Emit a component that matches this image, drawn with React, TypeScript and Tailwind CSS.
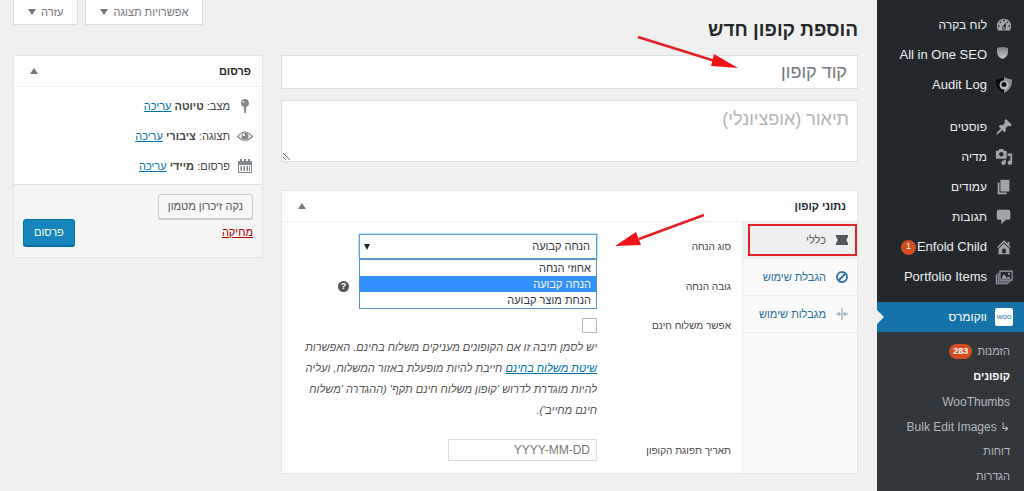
import type { ReactNode } from "react"

const icons = {
  dashboard:
    "M3.76 16h12.48c1.1-1.37 1.76-3.11 1.76-5 0-4.42-3.58-8-8-8s-8 3.58-8 8c0 1.89.66 3.63 1.76 5zM10 4c.55 0 1 .45 1 1s-.45 1-1 1-1-.45-1-1 .45-1 1-1zM6 6c.55 0 1 .45 1 1s-.45 1-1 1-1-.45-1-1 .45-1 1-1zm8 0c.55 0 1 .45 1 1s-.45 1-1 1-1-.45-1-1 .45-1 1-1zm-5.37 5.55L12 7v6c0 1.1-.9 2-2 2s-2-.9-2-2c0-.57.24-1.08.63-1.45zM4 10c.55 0 1 .45 1 1s-.45 1-1 1-1-.45-1-1 .45-1 1-1zm12 0c.55 0 1 .45 1 1s-.45 1-1 1-1-.45-1-1 .45-1 1-1zm-5 3c0-.55-.45-1-1-1s-1 .45-1 1 .45 1 1 1 1-.45 1-1z",
  post: "M10.44 3.02l1.82-1.82 6.36 6.35-1.83 1.82c-1.05-.68-2.48-.57-3.41.36l-.75.75c-.92.93-1.04 2.35-.35 3.41l-1.83 1.82-2.41-2.41-2.8 2.79c-.42.42-3.38 2.71-3.8 2.29s1.86-3.39 2.28-3.81l2.79-2.79L4.1 9.36l1.83-1.82c1.05.69 2.48.57 3.4-.36l.75-.75c.93-.92 1.05-2.35.36-3.41z",
  media:
    "M13 11V4c0-.55-.45-1-1-1h-1.67L9 1H5L3.67 3H2c-.55 0-1 .45-1 1v7c0 .55.45 1 1 1h10c.55 0 1-.45 1-1zM7 4.5c1.38 0 2.5 1.12 2.5 2.5S8.38 9.5 7 9.5 4.5 8.38 4.5 7 5.62 4.5 7 4.5zM14 6h5v10.5c0 1.38-1.12 2.5-2.5 2.5S14 17.88 14 16.5s1.12-2.5 2.5-2.5c.17 0 .34.02.5.05V9h-3V6zm-4 8.05V13h2v3.5c0 1.38-1.12 2.5-2.5 2.5S7 17.88 7 16.5 8.12 14 9.5 14c.17 0 .34.02.5.05z",
  page: "M6 15V2h10v13H6zm-1 1h8v2H3V5h2v11z",
  comments:
    "M4 2h11c1.1 0 2 .9 2 2v7c0 1.1-.9 2-2 2h-3l-5 5v-5H4c-1.1 0-2-.9-2-2V4c0-1.1.9-2 2-2z",
  home: "M16 8.5l1.53 1.53-1.06 1.06L10 4.6l-6.47 6.49-1.06-1.06L10 2.5l4 4v-2h2v4zm-6-2.46l6 5.99V18H4v-5.97zM12 17v-5H8v5h4z",
}

function Dashicon({ name }: { name: keyof typeof icons }) {
  return (
    <svg viewBox="0 0 20 20" className="size-[18px]" fill="#a0a5aa" fillRule="evenodd">
      <path d={icons[name]} />
    </svg>
  )
}

function SeoShield() {
  return (
    <svg viewBox="0 0 18 18" className="size-[18px]">
      <defs>
        <linearGradient id="seo" x1="0" y1="0" x2="0" y2="1">
          <stop offset="0" stopColor="#7b7d7f" />
          <stop offset="1" stopColor="#c8c9ca" />
        </linearGradient>
      </defs>
      <path d="M2 2q5-2 11 0v4q0 5-5.500 7Q2 11 2 6z" fill="url(#seo)" />
    </svg>
  )
}

function AuditShield() {
  return (
    <svg viewBox="0 0 18 18" className="size-[18px]">
      <path d="M9 1Q5 3 1 3.500q-.5 9.500 8 13.500z" fill="#08090a" />
      <path d="M9 1q4 2 8 2.500.5 9.500-8 13.500z" fill="#8d9196" />
      <circle cx="9" cy="9" r="4.500" fill="#b9bcbf" />
      <circle cx="9" cy="8.500" r="2.500" fill="#111417" />
    </svg>
  )
}

function Gallery() {
  return (
    <svg viewBox="0 0 20 20" className="size-[18px]" fill="none" stroke="#a79db2" strokeWidth="1.2">
      <path d="M5.500 3.500h13.500v10H5.500zM3.500 5.500v10h13.500M1.500 7.500v10H15" />
      <path d="M7 12l3-5 3 4 2-1.500 2.500 2.500z" fill="#a0a5aa" stroke="none" />
      <circle cx="15.500" cy="6.500" r="1.200" fill="#a0a5aa" stroke="none" />
    </svg>
  )
}

function WooBadge() {
  return (
    <span className="flex size-[18px] items-center justify-center rounded-xs bg-white text-[8px] leading-none text-[#1c74a8]">
      woo
    </span>
  )
}

function Triangle({ up = false }: { up?: boolean }) {
  return (
    <svg viewBox="0 0 8 6" className="h-[6px] w-[8px] shrink-0" fill="#72777c">
      <path d={up ? "M4 0l4 6H0z" : "M0 0h8L4 6z"} />
    </svg>
  )
}

type MenuItem = { label: string; icon: ReactNode; count?: number }

const menuGroups: MenuItem[][] = [
  [
    { label: "לוח בקרה", icon: <Dashicon name="dashboard" /> },
    { label: "All in One SEO", icon: <SeoShield /> },
    { label: "Audit Log", icon: <AuditShield /> },
  ],
  [
    { label: "פוסטים", icon: <Dashicon name="post" /> },
    { label: "מדיה", icon: <Dashicon name="media" /> },
    { label: "עמודים", icon: <Dashicon name="page" /> },
    { label: "תגובות", icon: <Dashicon name="comments" /> },
    { label: "Enfold Child", icon: <Dashicon name="home" />, count: 1 },
    { label: "Portfolio Items", icon: <Gallery /> },
  ],
]

const submenu = [
  { label: "הזמנות", count: 283 },
  { label: "קופונים", current: true },
  { label: "WooThumbs" },
  { label: "↳ Bulk Edit Images" },
  { label: "דוחות" },
  { label: "הגדרות" },
]

// Latin labels are set one step larger than the Hebrew ones
const isLatin = (label: string) => /[A-Za-z]/.test(label)

function Sidebar() {
  return (
    <nav className="flex w-[147px] shrink-0 flex-col bg-[#23282d] pt-[10px] text-[12px] text-[#eee]">
      {menuGroups.map((group, i) => (
        <ul key={i} className={i === 0 ? "mb-3" : "mb-[10px]"}>
          {group.map((item) => (
            <li key={item.label}>
              <a
                href="#"
                className={`flex h-[30px] items-center gap-2 ps-[11px] whitespace-nowrap ${isLatin(item.label) ? "text-[13px]" : ""}`}
              >
                {item.icon}
                <span className="flex items-center gap-px">
                  {item.label}
                  {item.count && (
                    <span className="flex size-[15px] items-center justify-center rounded-full bg-[#d54e21] text-[9px] text-white">
                      {item.count}
                    </span>
                  )}
                </span>
              </a>
            </li>
          ))}
        </ul>
      ))}
      <a href="#" className="relative flex h-[30px] items-center gap-2 bg-[#1673aa] ps-[11px] text-white">
        <WooBadge />
        ווקומרס
        <svg viewBox="0 0 7 14" className="absolute top-2 left-0 h-[14px] w-[7px]" fill="#f0f0f0">
          <path d="M0 0l7 7-7 7z" />
        </svg>
      </a>
      <ul className="flex-1 bg-[#32373c] pt-[7px] text-[11px] text-[#b4b9be]">
        {submenu.map((item) => (
          <li key={item.label}>
            <a
              href="#"
              className={`flex h-[25px] items-center gap-[5px] ps-[14px] whitespace-nowrap ${item.current ? "font-bold text-white" : ""} ${isLatin(item.label) ? "text-[12px]" : ""}`}
            >
              {item.label}
              {item.count && (
                <span className="flex h-[15px] items-center rounded-full bg-[#d54e21] px-1 text-[9px] font-bold text-white">
                  {item.count}
                </span>
              )}
            </a>
          </li>
        ))}
      </ul>
    </nav>
  )
}

function BoxHeader({ title }: { title: string }) {
  return (
    <div className="flex h-[31px] items-center justify-between border-b border-[#eee] ps-[11px] pe-4">
      <h2 className="text-[11px] font-bold text-[#23282d]">{title}</h2>
      <button type="button" aria-label="כיווץ" className="flex">
        <Triangle up />
      </button>
    </div>
  )
}

const statusRows = [
  {
    label: "מצב:",
    value: "טיוטה",
    icon: (
      <svg viewBox="0 0 16 16" className="size-4" fill="#82878c">
        <path d="M8 1a4 4 0 0 1 1.200 7.800L8.800 15H7.200L6.800 8.800A4 4 0 0 1 8 1zm-1.500 2a2 2 0 0 0-.8 2l1-.2q0-.8.700-1.200z" fillRule="evenodd" />
      </svg>
    ),
  },
  {
    label: "תצוגה:",
    value: "ציבורי",
    icon: (
      <svg viewBox="0 0 16 16" className="size-4" fill="none" stroke="#82878c">
        <path d="M.6 8.500Q8-.5 15.400 8.500 8 16 .6 8.500z" strokeWidth="1.200" />
        <circle cx="8" cy="8" r="3.600" fill="#82878c" stroke="none" />
        <circle cx="6.800" cy="6.800" r="1.200" fill="#fff" stroke="none" />
      </svg>
    ),
  },
  {
    label: "פרסום:",
    value: "מיידי",
    icon: (
      <svg viewBox="0 0 16 16" className="size-4" fill="#82878c" fillRule="evenodd">
        <path d="M1 3h2V1h2v2h2V1h2v2h2V1h2v2h2v12H1zm1 4v7h12V7zm1.500 1H5v5H3.500zm3 0H8v5H6.500zm3 0H11v5H9.500zm2.500 0h1v5h-1z" />
      </svg>
    ),
  },
]

function PublishBox() {
  return (
    <aside className="w-[250px] shrink-0 self-start border border-[#e5e5e5] bg-white">
      <BoxHeader title="פרסום" />
      <ul className="pt-1 pb-[3px]">
        {statusRows.map((row) => (
          <li key={row.label} className="flex h-[30px] items-center gap-[7px] px-[9px]">
            {row.icon}
            <span>
              {row.label} <b>{row.value}</b>{" "}
              <a href="#" className="text-[#0073aa] underline">
                עריכה
              </a>
            </span>
          </li>
        ))}
      </ul>
      <div className="flex flex-col border-t border-[#ddd] bg-[#f5f5f5] px-[9px] pt-[9px] pb-[11px]">
        <button
          type="button"
          className="h-[25px] self-start rounded-[3px] border border-[#ccc] bg-[#f7f7f7] px-[9px] text-[#555] shadow-[0_1px_0_#ccc]"
        >
          נקה זיכרון מטמון
        </button>
        <div className="flex items-center justify-between">
          <a href="#" className="text-[#a00] underline">
            מחיקה
          </a>
          <button
            type="button"
            className="h-[27px] rounded-[3px] border border-[#0073aa] bg-[#1585bb] px-[10px] text-white shadow-[0_1px_0_#006799]"
          >
            פרסום
          </button>
        </div>
      </div>
    </aside>
  )
}

function Arrow({ className, line, head }: { className: string; line: string; head: string }) {
  return (
    <svg viewBox="0 0 102 36" className={`pointer-events-none absolute h-[36px] w-[102px] ${className}`}>
      <path d={line} stroke="#e31f23" strokeWidth="2.4" />
      <path d={head} fill="#f01418" />
    </svg>
  )
}

const tabs = [
  {
    label: "כללי",
    active: true,
    icon: (
      <svg viewBox="0 0 12 12" className="size-3" fill="#50555a">
        <path d="M0 1h12v2q-3 3 0 6v2H0V9q3-3 0-6z" />
      </svg>
    ),
  },
  {
    label: "הגבלת שימוש",
    icon: (
      <svg viewBox="0 0 12 12" className="size-3" fill="none" stroke="#2a6f9e" strokeWidth="1.8">
        <circle cx="6" cy="6" r="5" />
        <path d="M9.500 2.500l-7 7" />
      </svg>
    ),
  },
  {
    label: "מגבלות שימוש",
    icon: (
      <svg viewBox="0 0 12 12" className="size-3" fill="none" stroke="#7f97a8">
        <path d="M6 0v12M0 6h4M12 6H8M2.500 4l2 2-2 2M9.500 4l-2 2 2 2" />
      </svg>
    ),
  },
]

const discountTypes = ["אחוזי הנחה", "הנחה קבועה", "הנחת מוצר קבועה"]

function DiscountType() {
  return (
    <div className="relative w-[238px]">
      <select
        id="discount_type"
        defaultValue={discountTypes[1]}
        className="block h-[25px] w-full appearance-none border border-[#5b9dd9] bg-white ps-[6px] text-[11px] text-[#32373c] shadow-[0_0_2px_rgba(30,140,190,.8)]"
      >
        {discountTypes.map((type) => (
          <option key={type}>{type}</option>
        ))}
      </select>
      <svg viewBox="0 0 6 6" className="pointer-events-none absolute top-[10px] left-[5px] size-[6px]" fill="#222">
        <path d="M0 0h6L3 6z" />
      </svg>
      <ul className="absolute inset-x-0 top-full z-10 border border-[#5b8fc4] bg-white text-[11px] leading-4 text-[#32373c]">
        {discountTypes.map((type, i) => (
          <li key={type} className={i === 1 ? "bg-[#3390ff] px-[5px] text-white" : "px-[5px]"}>
            {type}
          </li>
        ))}
      </ul>
    </div>
  )
}

function CouponData() {
  return (
    <section className="mt-7 border border-[#e5e5e5] bg-white">
      <BoxHeader title="נתוני קופון" />
      <div className="flex">
        <ul className="w-[115px] shrink-0 border-e border-[#eee] bg-[#fafafa]">
          {tabs.map((tab) => (
            <li key={tab.label} className={`relative border-b border-[#eee] ${tab.active ? "bg-[#eee]" : ""}`}>
              <a
                href="#"
                className={`flex h-9 items-center gap-[10px] ps-[9px] whitespace-nowrap ${tab.active ? "text-[#555]" : "text-[#1f6d9c]"}`}
              >
                {tab.icon}
                {tab.label}
              </a>
              {tab.active && <span className="absolute inset-y-[2px] right-0 left-[5px] border-2 border-[#e02326]" />}
            </li>
          ))}
        </ul>
        <form className="flex min-w-0 flex-1 flex-col ps-[11px] pt-3 pb-3">
          <div className="relative flex items-center">
            <label htmlFor="discount_type" className="w-[134px] shrink-0 text-[10px]">
              סוג הנחה
            </label>
            <DiscountType />
            <Arrow className="-top-[22px] right-[20px]" line="M95 3L30 27" head="M6 34L27 20L32 33z" />
          </div>
          <div className="mt-[15px] flex items-center">
            <label htmlFor="coupon_amount" className="w-[134px] shrink-0 text-[10px]">
              גובה הנחה
            </label>
            <input id="coupon_amount" className="h-[25px] w-[238px] border border-[#ddd] px-[6px]" />
            <button
              type="button"
              aria-label="עזרה"
              className="ms-[10px] flex size-[11px] items-center justify-center rounded-full bg-[#555] text-[9px] font-bold text-white"
            >
              ?
            </button>
          </div>
          <div className="mt-[19px] flex items-center">
            <label htmlFor="free_shipping" className="w-[134px] shrink-0 text-[10px]">
              אפשר משלוח חינם
            </label>
            <input id="free_shipping" type="checkbox" className="size-[15px] appearance-none border border-[#b4b9be] bg-white" />
          </div>
          <p className="ms-[134px] mt-1 max-w-[300px] leading-[21px] text-[#555] italic">
            יש לסמן תיבה זו אם הקופונים מעניקים משלוח בחינם. האפשרות{" "}
            <a href="#" className="text-[#0073aa] underline">
              שיטת משלוח בחינם
            </a>{" "}
            חייבת להיות מופעלת באזור המשלוח, ועליה להיות מוגדרת לדרוש 'קופון משלוח חינם תקף' (ההגדרה 'משלוח חינם מחייב').
          </p>
          <div className="mt-[18px] flex items-center">
            <label htmlFor="expiry_date" className="w-[134px] shrink-0 text-[10px]">
              תאריך תפוגת הקופון
            </label>
            <input
              id="expiry_date"
              placeholder="YYYY-MM-DD"
              className="h-[22px] w-[149px] border border-[#ddd] px-[6px] text-[12px] placeholder:text-[#777]"
            />
          </div>
        </form>
      </div>
    </section>
  )
}

export default function App() {
  return (
    <div dir="rtl" className="flex min-h-screen bg-[#f0f0f0] font-['Liberation_Sans',sans-serif] text-[11px] text-[#444]">
      <Sidebar />
      <main className="min-w-0 flex-1 ps-[19px] pe-[13px]">
        <header className="flex h-[55px] items-start justify-between">
          <h1 className="pt-4 text-[19px] leading-7 font-bold text-[#23282d]">הוספת קופון חדש</h1>
          <div className="flex gap-[7px]">
            {["אפשרויות תצוגה", "עזרה"].map((label) => (
              <button
                key={label}
                type="button"
                className="flex h-[25px] items-center gap-[5px] border border-t-0 border-[#ddd] bg-white px-[14px] text-[#72777c]"
              >
                {label}
                <Triangle />
              </button>
            ))}
          </div>
        </header>
        <div className="flex gap-[18px]">
          <div className="min-w-0 flex-1">
            <div className="relative">
              <input
                aria-label="קוד קופון"
                placeholder="קוד קופון"
                className="block h-[34px] w-full border border-[#ddd] bg-white px-[10px] text-[18px] placeholder:text-[#72777c]"
              />
              <Arrow className="-top-[20px] right-[119px]" line="M1 2L78 26" head="M101 33L77 19L74 31z" />
            </div>
            <textarea
              aria-label="תיאור (אופציונלי)"
              placeholder="תיאור (אופציונלי)"
              className="mt-[11px] block h-[62px] w-full border border-[#ddd] bg-white px-2 py-1 text-[18px] leading-7 placeholder:text-[#b4b4b4]"
            />
            <CouponData />
          </div>
          <PublishBox />
        </div>
      </main>
    </div>
  )
}
